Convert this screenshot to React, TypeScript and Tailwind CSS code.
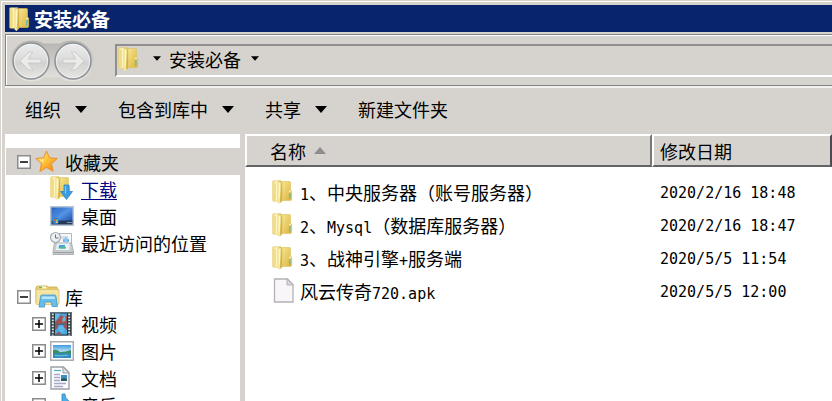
import React from 'react';

interface IconProps {
    className?: string;
}

const FolderShape = () => (
    <>
        <defs>
            <linearGradient id="folderBack" x1="0" y1="0" x2="1" y2="1">
                <stop offset="0" stopColor="#f7e58f" />
                <stop offset="1" stopColor="#d9b33c" />
            </linearGradient>
            <linearGradient id="folderFront" x1="0" y1="0" x2="1" y2="0">
                <stop offset="0" stopColor="#f3dc80" />
                <stop offset="0.45" stopColor="#fdf7c4" />
                <stop offset="1" stopColor="#d8b545" />
            </linearGradient>
        </defs>
        <path d="M10 1.5h7.5q1 0 1 1V10l1.200 1.200V19q0 1.500-1.500 1.500H10z" fill="url(#folderBack)" stroke="#dcc05c" strokeWidth="0.6" />
        <path d="M0.700 1.500Q0.700.700 1.500.700H9v20.500H1.500q-.8 0-.8-.8z" fill="url(#folderFront)" stroke="#dfc563" strokeWidth="0.6" />
        <path d="M5.500 3.500L10 1.200V21.500L7.500 24l-2-1.500z" fill="url(#folderFront)" />
        <path d="M10 1.500V21L7.600 23.600V20z" fill="#cfa735" opacity="0.65" />
        <path d="M3 3v17" stroke="#e9cf6c" strokeWidth="2" opacity="0.5" />
        <path d="M17.800 13v5.500" stroke="#58bfc5" strokeWidth="1.400" />
        <path d="M17.300 11.500h1.400" stroke="#fff" strokeWidth="1.400" />
    </>
);

const FolderIcon: React.FC<IconProps> = ({ className }) => (
    <svg viewBox="0 0 21 24" width="21" height="24" className={className} aria-hidden="true">
        <FolderShape />
    </svg>
);

const DownloadsIcon = () => (
    <svg viewBox="0 0 23 25" width="23" height="25" aria-hidden="true">
        <FolderShape />
        <path d="M14 9h5v6.500h3.500l-6 8-6-8H14z" fill="#3b9de0" stroke="#2f83c6" strokeWidth="0.8" />
        <path d="M15.500 10v7.500" stroke="#83cbf3" strokeWidth="1.200" />
    </svg>
);

const StarIcon = () => (
    <svg viewBox="0 0 23 23" width="23" height="23" aria-hidden="true">
        <defs>
            <linearGradient id="star" x1="0" y1="0" x2="0.800" y2="1">
                <stop offset="0" stopColor="#ffe783" />
                <stop offset="0.500" stopColor="#ffc43b" />
                <stop offset="1" stopColor="#f18a18" />
            </linearGradient>
        </defs>
        <path d="M11.500 1l3 6.800 7.700.7-5.700 5.200 1.600 7.500-6.600-3.700-6.600 3.900 1.600-7.800L.8 8.500l7.800-.8z" fill="url(#star)" stroke="#e9902b" strokeWidth="1" strokeLinejoin="round" />
        <path d="M11.500 3.500L9.400 8.900l-5.500.7 4 3.300z" fill="#fff6b5" opacity="0.6" />
    </svg>
);

const DesktopIcon = () => (
    <svg viewBox="0 0 24 20" width="24" height="20" aria-hidden="true">
        <defs>
            <linearGradient id="desktop" x1="0" y1="0" x2="1" y2="1">
                <stop offset="0" stopColor="#1f58b8" />
                <stop offset="0.500" stopColor="#5694e4" />
                <stop offset="1" stopColor="#1c4da6" />
            </linearGradient>
        </defs>
        <rect x="0.500" y="0.500" width="23" height="19" fill="#b8cbe6" stroke="#b9c2cf" />
        <rect x="1.500" y="1.500" width="21" height="14" fill="url(#desktop)" />
        <path d="M1.500 3l14-1.500L6 13l-4.500 1z" fill="#3f82dc" opacity="0.5" />
        <rect x="1.500" y="14.500" width="21" height="4" fill="#263a58" />
        <path d="M17 16.500h5" stroke="#8896ab" />
        <circle cx="5.500" cy="15" r="3.200" fill="#2b83cf" />
        <path d="M3.300 13.500q1-.8 2-.2v1.500H3.300z" fill="#f2653b" />
        <path d="M5.800 13.500q1 .5 2 0v1.600h-2z" fill="#9ad255" />
        <path d="M5.800 15.500h2v1.500h-2z" fill="#f8cf48" />
    </svg>
);

const RecentIcon = () => (
    <svg viewBox="0 0 24 24" width="24" height="24" aria-hidden="true">
        <path d="M7 2.500h14.500V17H7z" fill="#f7f9fb" stroke="#b1b6ba" />
        <path d="M9 5h9v3H9z" fill="#d7dde2" />
        <path d="M13 9.500h6" stroke="#5baae5" strokeWidth="2.500" />
        <path d="M16 6.500v5" stroke="#8ac6ef" strokeWidth="3" />
        <path d="M4.500 12h17l2 9v2.500H3V20z" fill="#c9ccce" stroke="#a0a5a8" strokeWidth="0.8" />
        <path d="M7 12.500h12.500V19H6z" fill="#edf2f5" />
        <path d="M9 14h6v3.500H8.500z" fill="#3fa8df" />
        <path d="M11 16h5v1.500h-6z" fill="#64b95d" />
        <path d="M4 21.500h19" stroke="#999ea2" />
        <circle cx="5.500" cy="6.500" r="5" fill="#edf0f2" stroke="#a5adb3" strokeWidth="1.200" />
        <path d="M5.500 3.500v3.500h3" fill="none" stroke="#61727f" />
    </svg>
);

const LibraryIcon = () => (
    <svg viewBox="0 0 25 23" width="25" height="23" aria-hidden="true">
        <path d="M1 3q0-2 2-2h9l1.500 1H21q1.500 0 1.500 1.500V18H1z" fill="#e6c967" stroke="#c8aa4e" strokeWidth="0.8" />
        <path d="M3.500 2.500h8" stroke="#fff9d7" strokeWidth="2" />
        <path d="M4 2.500h3" stroke="#62b64a" strokeWidth="1.500" />
        <path d="M1 4.500h23V18q0 1.500-1.500 1.500H2.500Q1 19.500 1 18z" fill="#f5e5a0" stroke="#d9c06c" strokeWidth="0.8" />
        <path d="M5.500 11.500q0-1.500 1.500-1.500h12.500q1.500 0 1.500 1.500l1.500 10H17L16.500 17H10l-.5 5H4z" fill="#69bdea" stroke="#4298cb" strokeWidth="0.8" />
        <path d="M7 11.500h12.500l.5 2.500H6.500z" fill="#b9e5fa" />
    </svg>
);

const VideoIcon = () => (
    <svg viewBox="0 0 22 24" width="22" height="24" aria-hidden="true">
        <rect x="0.500" y="0.500" width="21" height="23" fill="#29343b" stroke="#63717a" />
        <path d="M2.800 1.500v22M19.200 1.500v22" stroke="#dce7eb" strokeWidth="2" strokeDasharray="1.700 1.300" />
        <path d="M5 1.500h12v10H5zM5 12.500h12v10H5z" fill="#4aa7df" />
        <path d="M5 10l3-3 3-4 3 2 3-2v8.500H5z" fill="#a94f4a" />
        <path d="M5 1.500h5L8 6l-3 3zM12.500 6l3-2v5l-3 1z" fill="#63b7e9" />
        <path d="M5 12.500h4l-1 3-3 3zM17 12.500v6l-3-3-1-3zM5 22.500l4-3 3 3z" fill="#94585c" />
        <path d="M8 15l4-2 3 4-2 4-4-2z" fill="#5bb7ef" />
    </svg>
);

const PictureIcon = () => (
    <svg viewBox="0 0 24 20" width="24" height="20" aria-hidden="true">
        <defs>
            <linearGradient id="sky" x1="0" y1="0" x2="0" y2="1">
                <stop offset="0" stopColor="#419bdf" />
                <stop offset="0.600" stopColor="#d2f0f8" />
                <stop offset="1" stopColor="#328cc8" />
            </linearGradient>
        </defs>
        <rect x="0.750" y="0.750" width="22.500" height="18.500" fill="#fff" stroke="#a9adb1" strokeWidth="1.500" />
        <rect x="3" y="4" width="18" height="13" fill="url(#sky)" />
        <path d="M3 9q4-1 7 2 6 0 11-2v4H3z" fill="#3b8f67" />
        <path d="M3 13q9-2 18 0v4H3z" fill="#318cbd" />
        <path d="M5 14.500q6 1 13-.5" stroke="#75c8df" fill="none" />
    </svg>
);

const DocumentIcon = () => (
    <svg viewBox="0 0 20 24" width="20" height="24" aria-hidden="true">
        <path d="M1 1h12.500L19 6.500V23H1z" fill="#fafcfd" stroke="#9ca1a5" strokeWidth="1.400" />
        <path d="M13 1v6h6z" fill="#dce1e4" stroke="#9ca1a5" />
        <path d="M4 4.500h7" stroke="#55aeb8" strokeWidth="1.200" />
        <path d="M4 8.500h6M4 11.500h6M4 14.500h6M4 17.500h12M4 20.500h9" stroke="#a9a6c9" strokeWidth="1.300" />
        <path d="M11 9h6v6h-6z" fill="#3c8ec9" />
        <path d="M11 13l3-1 3 1v2h-6z" fill="#285b5b" />
    </svg>
);

const MusicIcon = () => (
    <svg viewBox="0 0 22 24" width="22" height="24" aria-hidden="true">
        <path d="M12 1h3q0 4 3 6 3 3 1 8-1-4-4-5v9q0 4-5 4-5-1-4-4 2-4 6-3z" fill="#4baee9" stroke="#2687c8" strokeWidth="0.8" />
    </svg>
);

const FileIcon = () => (
    <svg viewBox="0 0 21 25" width="21" height="25" className="ml-px" aria-hidden="true">
        <path d="M1.500 1h13L20 6.500V24H1.500z" fill="#f8f6f9" stroke="#b3b1b5" strokeWidth="1.300" />
        <path d="M14 1v6h6z" fill="#d9d8dc" stroke="#b3b1b5" />
    </svg>
);

const NavButtons = () => (
    <div className="relative flex h-[44px] w-[86px] items-center gap-1 px-[2px]">
        <svg viewBox="0 0 86 44" width="86" height="44" className="absolute inset-0" aria-hidden="true">
            <defs>
                <linearGradient id="tray" x1="0" y1="0" x2="0" y2="1">
                    <stop offset="0" stopColor="#aaa8a6" />
                    <stop offset="0.600" stopColor="#d2d0cd" />
                    <stop offset="1" stopColor="#e9e7e4" />
                </linearGradient>
                <linearGradient id="orb" x1="0" y1="0" x2="0" y2="1">
                    <stop offset="0" stopColor="#ededed" />
                    <stop offset="0.450" stopColor="#dcdcdc" />
                    <stop offset="0.550" stopColor="#d2d2d1" />
                    <stop offset="1" stopColor="#e6e6e5" />
                </linearGradient>
            </defs>
            <path d="M22 1.500q8 0 13 3h16q5-3 13-3a20.500 20.500 0 010 41q-8 0-13-4H35q-5 4-13 4a20.500 20.500 0 010-41z" fill="url(#tray)" opacity="0.75" />
            {[22, 64].map((cx) => (
                <g key={cx}>
                    <circle cx={cx} cy="22" r="18" fill="url(#orb)" stroke="#8d9297" strokeWidth="1.500" />
                    <circle cx={cx} cy="22" r="16.500" fill="none" stroke="#f4f4f4" strokeWidth="1" opacity="0.7" />
                </g>
            ))}
            <path d="M11 22l9-9h4l-5 7h13v4H19l5 7h-4z" fill="#ebebea" stroke="#c6c7c7" strokeWidth="0.8" />
            <path d="M75 22l-9-9h-4l5 7H54v4h13l-5 7h4z" fill="#ebebea" stroke="#c6c7c7" strokeWidth="0.8" />
        </svg>
        <button aria-label="后退" className="relative size-10 rounded-full" />
        <button aria-label="前进" className="relative size-10 rounded-full" />
    </div>
);

const Caret: React.FC<IconProps> = ({ className }) => (
    <svg viewBox="0 0 12 7" width="12" height="7" className={className} aria-hidden="true">
        <path d="M0 0h12L6 7z" fill="currentColor" />
    </svg>
);

const Expander = ({ open }: { open: boolean }) => (
    <button aria-label={open ? '折叠' : '展开'} className="size-[14px] shrink-0">
        <svg viewBox="0 0 14 14" width="14" height="14" aria-hidden="true">
            <rect x="0.750" y="0.750" width="12.500" height="12.500" fill="#fff" stroke="#8c8c8c" strokeWidth="1.500" />
            <path d={open ? 'M3 7h8' : 'M3 7h8M7 3v8'} stroke="#000" strokeWidth="1.500" />
        </svg>
    </button>
);

interface TreeItem {
    label: string;
    icon: React.ReactNode;
    linked?: boolean;
    expandable?: boolean;
}

const favorites: TreeItem[] = [
    { label: '下载', icon: <DownloadsIcon />, linked: true },
    { label: '桌面', icon: <DesktopIcon /> },
    { label: '最近访问的位置', icon: <RecentIcon /> },
];

const libraries: TreeItem[] = [
    { label: '视频', icon: <VideoIcon />, expandable: true },
    { label: '图片', icon: <PictureIcon />, expandable: true },
    { label: '文档', icon: <DocumentIcon />, expandable: true },
    { label: '音乐', icon: <MusicIcon />, expandable: true },
];

const TreeGroup = ({ label, icon, items, active }: { label: string; icon: React.ReactNode; items: TreeItem[]; active?: boolean }) => (
    <section>
        <div className={`ml-px flex h-[27px] items-center pl-[11px] ${active ? 'bg-[#d6d3ce]' : ''}`}>
            <Expander open />
            <a href="#" className="ml-1 flex items-center">
                <span className="flex w-[30px]">{icon}</span>
                {label}
            </a>
        </div>
        <ul>
            {items.map((item) => (
                <li key={item.label} className="flex h-[27px] items-center pl-[27px]">
                    <span className="flex w-[18px]">{item.expandable && <Expander open={false} />}</span>
                    <a href="#" className="flex items-center">
                        <span className="flex w-[31px] shrink-0 justify-start">{item.icon}</span>
                        <span className={item.linked ? 'text-[#000080] underline underline-offset-2' : ''}>{item.label}</span>
                    </a>
                </li>
            ))}
        </ul>
    </section>
);

// latin runs use the half-width mono face, 9px per character
const Mono = ({ children }: { children: React.ReactNode }) => (
    <span className="font-['DejaVu_Sans_Mono',monospace] text-[15px]">{children}</span>
);

const files = [
    { key: 'a', name: <><Mono>1</Mono>、中央服务器（账号服务器）</>, icon: <FolderIcon />, date: '2020/2/16 18:48' },
    { key: 'b', name: <><Mono>2</Mono>、<Mono>Mysql</Mono>（数据库服务器）</>, icon: <FolderIcon />, date: '2020/2/16 18:47' },
    { key: 'c', name: <><Mono>3</Mono>、战神引擎<Mono>+</Mono>服务端</>, icon: <FolderIcon />, date: '2020/5/5 11:54' },
    { key: 'd', name: <>风云传奇<Mono>720.apk</Mono></>, icon: <FileIcon />, date: '2020/5/5 12:00' },
];

const commands = [
    { label: '组织', menu: true },
    { label: '包含到库中', menu: true },
    { label: '共享', menu: true },
    { label: '新建文件夹', menu: false },
];

const FileTable = () => (
    <table className="w-full table-fixed border-separate border-spacing-0 text-left">
        <colgroup>
            <col className="w-[407px]" />
            <col />
        </colgroup>
        <thead>
            <tr className="bg-[#d6d3ce]">
                <th className="h-[33px] border-2 border-t-white border-r-[#77777a] border-b-[#636366] border-l-white p-0 font-normal">
                    <button className="flex items-center gap-2 pl-[23px]">
                        名称
                        <Caret className="rotate-180 text-[#8d8d8d]" />
                    </button>
                </th>
                <th className="h-[33px] border-2 border-t-white border-r-[#4c4c50] border-b-[#636366] border-l-white p-0 font-normal">
                    <button className="pl-[6px]">修改日期</button>
                </th>
            </tr>
        </thead>
        <tbody className="before:block before:h-2">
            {files.map((file) => (
                <tr key={file.key}>
                    <td className="h-[33px] p-0 pl-[27px]">
                        <div className="flex items-center">
                            <span className="flex w-[28px]">{file.icon}</span>
                            <span className="pt-[3px] whitespace-nowrap">{file.name}</span>
                        </div>
                    </td>
                    <td className="h-[33px] p-0 pl-2 whitespace-nowrap">
                        <Mono>{file.date}</Mono>
                    </td>
                </tr>
            ))}
        </tbody>
    </table>
);

const App: React.FC = () => (
    <div className="flex h-screen flex-col overflow-hidden border-t border-l border-[#d6d3ce] bg-[#d6d3ce] font-['Noto_Sans_CJK_SC',sans-serif] text-[18px] leading-6 text-black">
        <div className="flex min-h-0 flex-1 flex-col border-t border-l border-white pt-[3px] pl-[3px]">
            <header className="flex h-[27px] shrink-0 items-center gap-1 bg-[#08246b] pl-1 text-white">
                <FolderIcon />
                <h1 className="text-[19px] font-bold">安装必备</h1>
            </header>

            <div className="mt-[2px] border border-r-0 border-[#848284]">
                <div className="flex h-[50px] items-center gap-5 border-t border-l border-white pl-[2px]">
                    <NavButtons />
                    <nav className="flex h-[33px] flex-1 items-center border-t-2 border-b-2 border-l-2 border-t-[#8f8d8f] border-b-white border-l-[#8f8d8f] pb-1">
                        <FolderIcon className="ml-[1px]" />
                        <button aria-label="上级" className="ml-[14px]">
                            <Caret className="w-[8px]" />
                        </button>
                        <a href="#" className="ml-2">安装必备</a>
                        <button aria-label="历史" className="ml-[10px]">
                            <Caret className="w-[8px]" />
                        </button>
                    </nav>
                </div>
            </div>

            <div className="flex h-[48px] shrink-0 items-center gap-[31px] border-t-2 border-[#f2f1ef] pb-1 pl-5">
                {commands.map((cmd) => (
                    <button key={cmd.label} className="flex items-center gap-[14px]">
                        {cmd.label}
                        {cmd.menu && <Caret />}
                    </button>
                ))}
            </div>

            <div className="flex min-h-0 flex-1 gap-[5px]">
                <aside className="flex w-[235px] shrink-0 flex-col gap-[27px] bg-white pt-[14px]">
                    <TreeGroup label="收藏夹" icon={<StarIcon />} items={favorites} active />
                    <TreeGroup label="库" icon={<LibraryIcon />} items={libraries} />
                </aside>
                <main className="min-w-0 flex-1 bg-white">
                    <FileTable />
                </main>
            </div>
        </div>
    </div>
);

export default App;
